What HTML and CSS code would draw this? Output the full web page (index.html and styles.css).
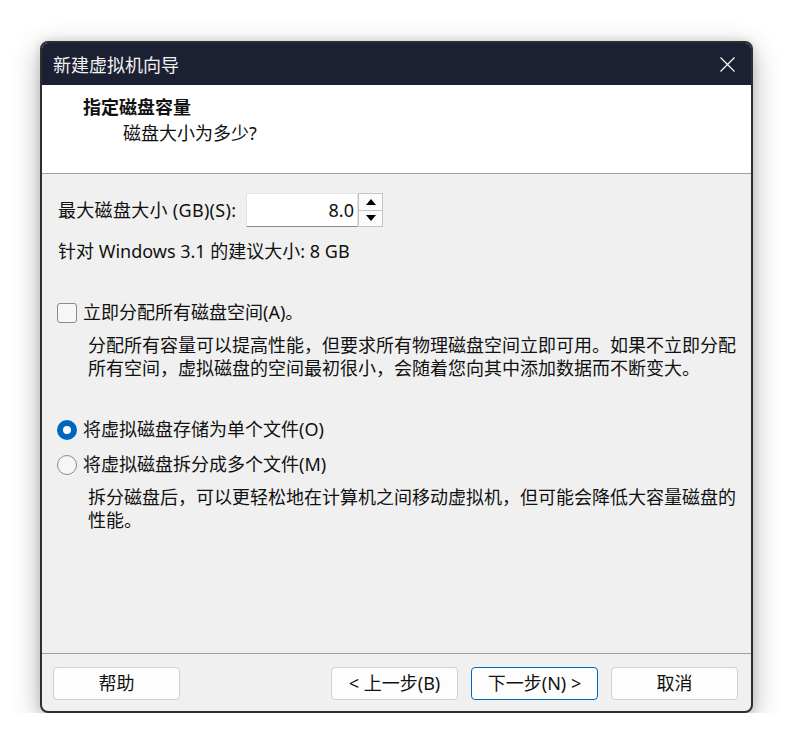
FILE: index.html
```html
<!DOCTYPE html>
<html lang="zh-CN">
<head>
<meta charset="utf-8">
<title>新建虚拟机向导</title>
<link rel="stylesheet" href="styles.css">
</head>
<body>
<div class="window">
  <div class="titlebar">
    <span class="title">新建虚拟机向导</span>
    <span class="close" aria-label="关闭">
      <svg width="15" height="15" viewBox="0 0 15 15"><path d="M0.5 0.5 L14.5 14.5 M14.5 0.5 L0.5 14.5" stroke="#ffffff" stroke-width="1.2" fill="none"/></svg>
    </span>
  </div>
  <div class="header">
    <div class="h-title">指定磁盘容量</div>
    <div class="h-sub">磁盘大小为多少?</div>
  </div>
  <div class="body">
    <div class="size-row">
      <span class="label">最大磁盘大小 (GB)(S):</span>
      <div class="spin">
        <div class="spin-input">8.0</div>
        <div class="spin-btns">
          <div class="spin-btn"><svg width="10" height="6" viewBox="0 0 10 6"><path d="M5 0 L10 6 L0 6 Z" fill="#000"/></svg></div>
          <div class="spin-btn"><svg width="10" height="6" viewBox="0 0 10 6"><path d="M0 0 L10 0 L5 6 Z" fill="#000"/></svg></div>
        </div>
      </div>
    </div>
    <div class="recommend">针对 Windows 3.1 的建议大小: 8 GB</div>

    <div class="option check-row">
      <span class="checkbox"></span>
      <span>立即分配所有磁盘空间(A)。</span>
    </div>
    <div class="desc">分配所有容量可以提高性能，但要求所有物理磁盘空间立即可用。如果不立即分配所有空间，虚拟磁盘的空间最初很小，会随着您向其中添加数据而不断变大。</div>

    <div class="option radio-row first">
      <span class="radio checked"></span>
      <span>将虚拟磁盘存储为单个文件(O)</span>
    </div>
    <div class="option radio-row second">
      <span class="radio"></span>
      <span>将虚拟磁盘拆分成多个文件(M)</span>
    </div>
    <div class="desc">拆分磁盘后，可以更轻松地在计算机之间移动虚拟机，但可能会降低大容量磁盘的性能。</div>
  </div>
  <div class="footer">
    <button class="btn">帮助</button>
    <div class="spacer"></div>
    <button class="btn">&lt; 上一步(B)</button>
    <button class="btn default">下一步(N) &gt;</button>
    <button class="btn">取消</button>
  </div>
</div>
</body>
</html>
```
FILE: styles.css
```css
html, body {
  margin: 0;
  padding: 0;
  background: #ffffff;
}
body {
  padding: 41px 0 0 40px;
  font-family: "Noto Sans", "Noto Sans CJK SC", sans-serif;
  font-size: 18px;
  line-height: 23px;
  color: #111111;
}
.window {
  width: 713px;
  height: 672px;
  box-sizing: border-box;
  border: 2px solid #2e2e2e;
  border-radius: 8px;
  overflow: hidden;
  background: #f0f0f0;
  box-shadow: 0 8px 28px rgba(0, 0, 0, 0.30), 0 0 10px rgba(0, 0, 0, 0.12);
  display: flex;
  flex-direction: column;
}
.titlebar {
  height: 42px;
  background: #1c2033;
  color: #f2f2f2;
  display: flex;
  align-items: center;
  justify-content: space-between;
  padding: 0 16px 0 11px;
  flex-shrink: 0;
}
.title {
  font-family: "Noto Sans CJK SC", sans-serif;
  font-size: 18px;
}
.close {
  display: flex;
  width: 15px;
  height: 15px;
}
.header {
  background: #ffffff;
  border-bottom: 1px solid #a0a0a0;
  padding: 10px 0 0 41px;
  box-sizing: border-box;
  height: 89px;
  flex-shrink: 0;
}
.h-title {
  font-weight: bold;
  font-family: "Noto Sans CJK SC", sans-serif;
}
.h-sub {
  margin-top: 4px;
  padding-left: 40px;
}
.body {
  flex: 1;
  padding: 19px 0 0 15px;
  border-bottom: 1px solid #a0a0a0;
}
.size-row {
  display: flex;
  align-items: center;
  height: 34px;
}
.label {
  width: 188px;
  padding-left: 1px;
  letter-spacing: 0.3px;
}
.spin {
  display: flex;
  height: 34px;
}
.spin-input {
  width: 112px;
  box-sizing: border-box;
  background: #ffffff;
  border: 1px solid #e4e4e4;
  border-bottom-color: #8a8a8a;
  text-align: right;
  padding-right: 3px;
  line-height: 32px;
  font-size: 18px;
}
.spin-btns {
  width: 25px;
  display: flex;
  flex-direction: column;
}
.spin-btn {
  flex: 1;
  box-sizing: border-box;
  border: 1px solid #c4c4c4;
  background: #fbfbfb;
  display: flex;
  align-items: center;
  justify-content: center;
}
.spin-btn + .spin-btn {
  border-top: none;
}
.recommend {
  margin-top: 13px;
  padding-left: 1px;
}
.option {
  display: flex;
  align-items: center;
  gap: 6px;
}
.check-row {
  margin-top: 38px;
}
.checkbox {
  width: 20px;
  height: 20px;
  box-sizing: border-box;
  border: 1px solid #8a8a8a;
  border-radius: 3px;
  background: #f6f6f6;
}
.desc {
  margin-top: 10px;
  padding-left: 31px;
  width: 660px;
}
.radio-row.first {
  margin-top: 38px;
}
.radio-row.second {
  margin-top: 12px;
}
.radio {
  width: 20px;
  height: 20px;
  box-sizing: border-box;
  border: 1px solid #8a8a8a;
  border-radius: 50%;
  background: #f6f6f6;
}
.radio.checked {
  border: 6px solid #0067c0;
  background: #ffffff;
}
.footer {
  height: 57px;
  flex-shrink: 0;
  display: flex;
  align-items: flex-start;
  gap: 13px;
  padding: 13px 13px 0 11px;
  box-sizing: border-box;
}
.spacer {
  flex: 1;
}
.btn {
  width: 127px;
  height: 33px;
  box-sizing: border-box;
  background: #fdfdfd;
  border: 1px solid #d0d0d0;
  border-radius: 4px;
  font-family: "Noto Sans", "Noto Sans CJK SC", sans-serif;
  font-size: 18px;
  color: #111111;
  padding: 0;
  line-height: 31px;
}
.btn.default {
  border-color: #0067c0;
}
```
